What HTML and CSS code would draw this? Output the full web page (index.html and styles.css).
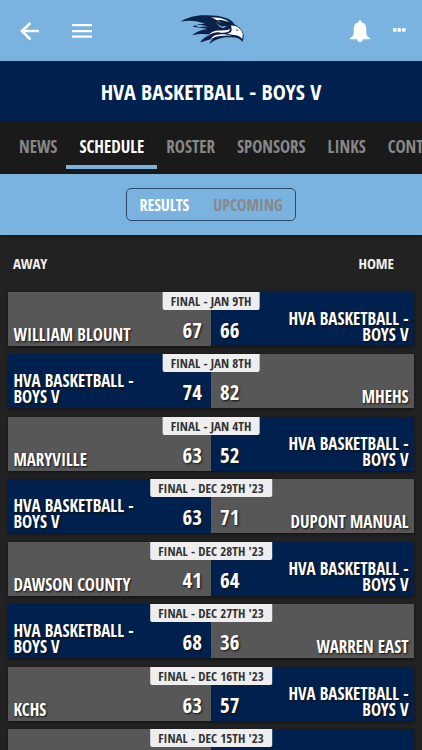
FILE: index.html
```html
<!DOCTYPE html>
<html lang="en">
<head>
    <meta charset="UTF-8">
    <meta name="viewport" content="width=device-width, initial-scale=1.0">
    <title>HVA Basketball - Boys V</title>
    <link rel="stylesheet" href="styles.css">
</head>
<body>
    <header class="top-bar">
        <div class="top-group">
            <button type="button" class="icon-button" aria-label="Back">
                <svg width="20" height="20" viewBox="0 0 20 20" fill="none" stroke="#fff" stroke-width="2.6"><path d="M19 10H2M10.500 2L2 10l8.500 8.500"/></svg>
            </button>
            <button type="button" class="icon-button" aria-label="Menu">
                <svg width="20" height="20" viewBox="0 0 20 20" fill="#fff"><path d="M0 3h20v2.300H0zM0 8.900h20v2.300H0zM0 14.500h20v2.300H0z"/></svg>
            </button>
        </div>
        <svg class="logo" width="66" height="32" viewBox="0 0 66 32" role="img" aria-label="Hawks logo">
            <path fill="#0b2147" d="M.5 6.500C8 2.500 15 .3 24 .3c8-.2 16 .4 22 2.700 4.500 1.700 7 3.700 8.500 6.500 4.500 2 8 5.500 9 10 .4 3-.1 5.500-1.300 7.500-1.200-2.800-3.700-4-7.700-4.500-5.500-.3-10-.7-14 .8-4 1.400-8 3-11 5.700.6-2 1.700-3.700 3.500-5-4.500.5-8.500 2-13 3.500 2.500-3.700 5.500-6.300 10-8-6-.8-11.500-.8-18 .7 4.500-3.700 9.500-5.400 15.500-6.200-5-1.200-9.500-1.500-15-2.500 3.500-1.800 7.500-2.500 12.500-2.700C17 5.300 9 5 .5 6.500z"/>
            <path fill="#7ab2e0" d="M15 10.200c5-.7 9-.2 13 1.300-3.500-.2-6 0-9 .7zM20 24c3-2.400 6.500-4 11-4.500-3.500 1.400-6 2.700-8.500 4.500z"/>
            <path fill="#fff" d="M51 10.500c6-.5 11 4 11.800 9l-.5 4.500c-2-2.700-5-3.800-8.700-3.900l-6.300-1.300 3-1.300c2-.9 1.300-4.500.7-7z"/>
            <path fill="#fff" d="M31 2.500c7-.3 14 .8 18.500 4.500-5-1.700-9.500-2.300-13-2 2.500 1 4 2.200 5 3.700-3.500-3-6.500-5-10.500-6.200zM41 15.500l7-.5 1.500-1.500c.5 1.700-.2 3-2 3.500-3 1.300-6 .7-9 .2-3.500-.2-6 .8-9.500 2.500 2-3 6-4.700 12-4.200zM36 20c6-1.500 11-.3 16 .5-6 .2-11 .1-15 1-2.500.7-4.500 1.700-6.500 2.800 1-1.900 3-3.600 5.500-4.300z"/>
            <path fill="#7ab2e0" d="M36 7l11 3.700-3.500 2.300c-3-.4-6-2.500-7.500-6z"/>
            <path fill="#0b2147" d="M36 6.500c4 1.500 7 2.200 12 4l-6 1c-2-.8-5-2.200-6-5zM56 14.500l2.500.5-1.800.9z"/>
        </svg>
        <div class="top-group">
            <button type="button" class="icon-button" aria-label="Notifications">
                <svg width="20" height="22" viewBox="0 0 20 22" fill="#fff"><path d="M8.700 1.500a1.300 1.300 0 0 1 2.600 0v.7c3.300.6 5 3 5 6.300v4.500c0 2 1 3.200 2.700 4.300.8.6 1 1.200 1 2H0c0-.8.200-1.400 1-2 1.700-1.100 2.700-2.300 2.700-4.300V8.500c0-3.300 1.700-5.700 5-6.300zM7.200 19.300h5.600a2.800 2.600 0 0 1-5.600 0z"/></svg>
            </button>
            <button type="button" class="icon-button" aria-label="More">
                <svg width="14" height="20" viewBox="0 0 14 20" fill="#fff"><rect x="1" y="7" width="3.500" height="3.800" rx="1"/><rect x="5.500" y="7" width="3.500" height="3.800" rx="1"/><rect x="10" y="7" width="3.500" height="3.800" rx="1"/></svg>
            </button>
        </div>
    </header>

    <h1 class="team-title">HVA BASKETBALL - BOYS V</h1>

    <nav class="tabs">
        <a href="#news">NEWS</a>
        <a href="#schedule" class="active">SCHEDULE</a>
        <a href="#roster">ROSTER</a>
        <a href="#sponsors">SPONSORS</a>
        <a href="#links">LINKS</a>
        <a href="#contact">CONTACT</a>
    </nav>

    <div class="filter-bar">
        <div class="toggle">
            <button type="button" class="selected">RESULTS</button>
            <button type="button">UPCOMING</button>
        </div>
    </div>

    <main>
        <div class="column-heads">
            <span>AWAY</span>
            <span>HOME</span>
        </div>

        <div class="games">
            <article class="game">
                <div class="side away"><span class="name">WILLIAM BLOUNT</span><span class="score">67</span></div>
                <div class="side home own"><span class="score">66</span><span class="name">HVA BASKETBALL - BOYS V</span></div>
                <div class="status">FINAL - JAN 9TH</div>
            </article>
            <article class="game">
                <div class="side away own"><span class="name">HVA BASKETBALL - BOYS V</span><span class="score">74</span></div>
                <div class="side home"><span class="score">82</span><span class="name">MHEHS</span></div>
                <div class="status">FINAL - JAN 8TH</div>
            </article>
            <article class="game">
                <div class="side away"><span class="name">MARYVILLE</span><span class="score">63</span></div>
                <div class="side home own"><span class="score">52</span><span class="name">HVA BASKETBALL - BOYS V</span></div>
                <div class="status">FINAL - JAN 4TH</div>
            </article>
            <article class="game">
                <div class="side away own"><span class="name">HVA BASKETBALL - BOYS V</span><span class="score">63</span></div>
                <div class="side home"><span class="score">71</span><span class="name">DUPONT MANUAL</span></div>
                <div class="status">FINAL - DEC 29TH '23</div>
            </article>
            <article class="game">
                <div class="side away"><span class="name">DAWSON COUNTY</span><span class="score">41</span></div>
                <div class="side home own"><span class="score">64</span><span class="name">HVA BASKETBALL - BOYS V</span></div>
                <div class="status">FINAL - DEC 28TH '23</div>
            </article>
            <article class="game">
                <div class="side away own"><span class="name">HVA BASKETBALL - BOYS V</span><span class="score">68</span></div>
                <div class="side home"><span class="score">36</span><span class="name">WARREN EAST</span></div>
                <div class="status">FINAL - DEC 27TH '23</div>
            </article>
            <article class="game">
                <div class="side away"><span class="name">KCHS</span><span class="score">63</span></div>
                <div class="side home own"><span class="score">57</span><span class="name">HVA BASKETBALL - BOYS V</span></div>
                <div class="status">FINAL - DEC 16TH '23</div>
            </article>
            <article class="game">
                <div class="side away"></div>
                <div class="side home own"></div>
                <div class="status">FINAL - DEC 15TH '23</div>
            </article>
        </div>
    </main>
</body>
</html>
```

FILE: styles.css
```css
:root {
    --sky: #7ab2e0;
    --navy: #00204e;
    --dark: #1a1a1a;
    --page: #222;
    --grey: #575757;
}
* {
    box-sizing: border-box;
}
body {
    margin: 0;
    height: 100vh;
    overflow: hidden;
    background: var(--page);
    color: #fff;
    font-family: 'Open Sans Condensed', 'Liberation Sans Narrow', 'Open Sans', sans-serif;
    font-weight: 700;
}
button {
    font: inherit;
    color: inherit;
    background: none;
    border: none;
    padding: 0;
    cursor: pointer;
}
svg {
    display: block;
}
.top-bar {
    display: grid;
    grid-template-columns: 1fr auto 1fr;
    align-items: center;
    height: 61px;
    padding: 0 16px 0 20px;
    background: var(--sky);
}
.top-group {
    display: flex;
    align-items: center;
    gap: 32px;
}
.top-group:last-child {
    justify-content: flex-end;
    gap: 22px;
}
.team-title {
    margin: 0;
    background: var(--navy);
    font-size: 22px;
    line-height: 61px;
    text-align: center;
}
.tabs {
    display: flex;
    height: 52px;
    padding-left: 8px;
    background: var(--dark);
    overflow: hidden;
}
.tabs a {
    padding: 0 11px;
    color: #888;
    font-size: 17px;
    line-height: 50px;
    text-decoration: none;
}
.tabs .active {
    position: relative;
    color: #fff;
}
.tabs .active::after {
    content: '';
    position: absolute;
    left: -2px;
    right: -2px;
    bottom: 5px;
    height: 4px;
    background: var(--sky);
}
.filter-bar {
    display: flex;
    justify-content: center;
    align-items: center;
    height: 61px;
    background: var(--sky);
    box-shadow: 0 1px 4px #111;
}
.toggle {
    display: flex;
    height: 33px;
    border: 1px solid #2b4c6e;
    border-radius: 5px;
}
.toggle button {
    padding: 0 12px;
    color: #888;
    font-size: 16px;
}
.toggle .selected {
    color: #fff;
}
.column-heads {
    display: flex;
    justify-content: space-between;
    padding: 0 28px 0 13px;
    color: #eee;
    font-size: 15px;
    line-height: 57px;
}
.games {
    display: grid;
    gap: 2vw;
    padding: 0 2vw;
}
.game {
    position: relative;
    display: grid;
    grid-template-columns: 1fr 1fr;
    height: 54px;
    box-shadow: 0 1px 3px #111;
}
.side {
    display: flex;
    justify-content: space-between;
    align-items: flex-end;
    padding: 0 5px 3px;
    background: var(--grey);
    text-shadow: 1px 1px 2px #111;
}
.own {
    background: var(--navy);
}
.name {
    width: 132px;
    font-size: 17px;
    line-height: 16px;
}
.home .name {
    text-align: right;
}
.score {
    padding: 0 4px;
    font-size: 21px;
    line-height: 26px;
}
.status {
    position: absolute;
    top: 0;
    left: 50%;
    transform: translateX(-50%);
    padding: 0 8px;
    border-radius: 0 0 2px 2px;
    background: #eee;
    color: #333;
    font-size: 13px;
    line-height: 18px;
    white-space: nowrap;
}
```
